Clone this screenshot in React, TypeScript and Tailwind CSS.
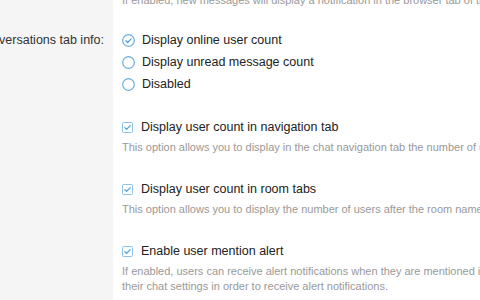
import React from "react";

const font = { fontFamily: '"Liberation Sans", Arial, Helvetica, sans-serif' };

function RadioIcon({ checked }: { checked?: boolean }) {
  return (
    <svg width="13" height="13" viewBox="0 0 13 13" className="shrink-0">
      <circle cx="6.5" cy="6.5" r="5.8" fill="white" stroke="#6aaee2" strokeWidth="1.2" />
      {checked && (
        <path d="M3.9 6.7 L5.8 8.5 L9.2 4.9" fill="none" stroke="#4f9edb" strokeWidth="1.2" strokeLinecap="round" strokeLinejoin="round" />
      )}
    </svg>
  );
}

function CheckboxIcon() {
  return (
    <svg width="11" height="11" viewBox="0 0 11 11" className="shrink-0">
      <rect x="0.5" y="0.5" width="10" height="10" rx="1" fill="white" stroke="#8ec2ea" strokeWidth="1" />
      <path d="M2.8 5.6 L4.6 7.4 L8.2 3.6" fill="none" stroke="#4f9edb" strokeWidth="1.2" strokeLinecap="round" strokeLinejoin="round" />
    </svg>
  );
}

const radios = [
  { label: "Display online user count", checked: true },
  { label: "Display unread message count", checked: false },
  { label: "Disabled", checked: false },
];

export default function App() {
  return (
    <div className="flex h-[300px] w-[480px] overflow-hidden bg-white text-[#222]" style={font}>
      {/* label column */}
      <div className="w-[113px] shrink-0 bg-[#f5f5f5] pr-[9px]">
        <div className="mt-[29px] flex h-[22px] items-center justify-end whitespace-nowrap text-[12.5px] text-[#333]">
          Conversations tab info:
        </div>
      </div>

      {/* fields */}
      <div className="flex-1 pl-[9px] whitespace-nowrap">
        <p className="-mt-[7px] h-[14px] text-[11px] leading-[14px] text-[#999]">
          If enabled, new messages will display a notification in the browser tab of the chat window.
        </p>

        <div className="mt-[22px] flex flex-col">
          {radios.map((r) => (
            <div key={r.label} className="flex h-[22px] items-center gap-[7px] text-[12.5px] text-[#222]">
              <RadioIcon checked={r.checked} />
              <span>{r.label}</span>
            </div>
          ))}
        </div>

        <div className="mt-[22px] flex h-[20px] items-center gap-[8px] text-[12.5px]">
          <CheckboxIcon />
          <span>Display user count in navigation tab</span>
        </div>
        <p className="mt-[3px] h-[14px] text-[11px] leading-[14px] text-[#999]">
          This option allows you to display in the chat navigation tab the number of users in the room.
        </p>

        <div className="mt-[25px] flex h-[20px] items-center gap-[8px] text-[12.5px]">
          <CheckboxIcon />
          <span>Display user count in room tabs</span>
        </div>
        <p className="mt-[3px] h-[14px] text-[11px] leading-[14px] text-[#999]">
          This option allows you to display the number of users after the room name in the tabs.
        </p>

        <div className="mt-[25px] flex h-[20px] items-center gap-[8px] text-[12.5px]">
          <CheckboxIcon />
          <span>Enable user mention alert</span>
        </div>
        <p className="mt-[3px] text-[11px] leading-[15px] text-[#999]">
          If enabled, users can receive alert notifications when they are mentioned in a message. Users have to enable it in
          <br />
          their chat settings in order to receive alert notifications.
        </p>
      </div>
    </div>
  );
}
